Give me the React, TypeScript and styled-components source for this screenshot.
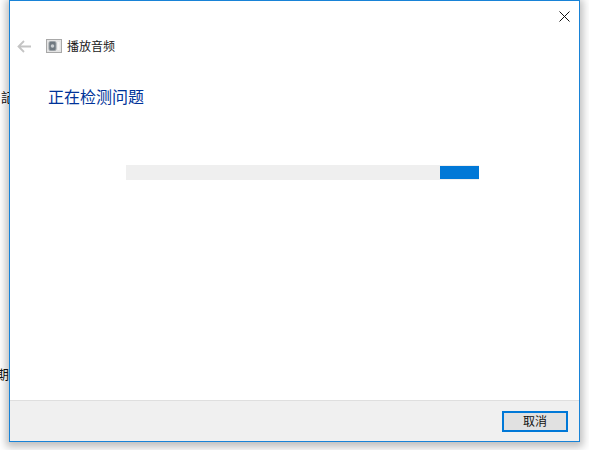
import React from 'react'
import styled, { createGlobalStyle } from 'styled-components'

const GlobalStyle = createGlobalStyle`
  html, body {
    margin: 0;
    padding: 0;
    background: #fff;
    overflow: hidden;
  }
`

const Desktop = styled.div`
  position: relative;
  width: 589px;
  height: 450px;
  padding-left: 9px;
  box-sizing: border-box;
  overflow: hidden;
  background: #fff;
  font-family: 'Noto Sans CJK SC', 'Liberation Sans', sans-serif;
`

const BehindText = styled.span<{ $top: number; $left: number }>`
  position: absolute;
  left: ${(p) => p.$left}px;
  top: ${(p) => p.$top}px;
  font-size: 13px;
  line-height: 16px;
  color: #111;
`

const Dialog = styled.div`
  position: relative;
  width: 571px;
  height: 442px;
  box-sizing: border-box;
  display: flex;
  flex-direction: column;
  background: #fff;
  border: 1px solid #1883d7;
  box-shadow: 0 2px 8px 3px rgba(0, 0, 0, 0.26);
`

const CloseButton = styled.button`
  align-self: flex-end;
  width: 30px;
  height: 30px;
  padding: 0;
  display: flex;
  align-items: center;
  justify-content: center;
  background: none;
  border: 0;
`

const NavRow = styled.div`
  display: flex;
  align-items: center;
  height: 30px;
  padding-left: 7px;
`

const BackButton = styled.span`
  display: flex;
  width: 16px;
  margin-right: 13px;
`

const AppIcon = styled.span`
  display: flex;
  margin-right: 5px;
`

const NavTitle = styled.span`
  font-size: 12px;
  line-height: 16px;
  color: #1a1a1a;
`

const Content = styled.main`
  flex: 1;
  padding: 24px 0 0 38px;
`

const Heading = styled.h1`
  margin: 0;
  font-size: 16px;
  line-height: 22px;
  font-weight: 400;
  color: #003399;
`

const Track = styled.div`
  display: flex;
  justify-content: flex-end;
  width: 353px;
  height: 15px;
  margin: 58px 0 0 78px;
  background: #efefef;
`

const Bar = styled.div`
  width: 39px;
  height: 13px;
  margin-top: 1px;
  background: #0078d7;
`

const Footer = styled.footer`
  display: flex;
  align-items: center;
  justify-content: flex-end;
  height: 40px;
  padding: 0 11px 0 0;
  background: #f0f0f0;
  border-top: 1px solid #dfdfdf;
`

const CancelButton = styled.button`
  width: 66px;
  height: 21px;
  padding: 0;
  box-sizing: border-box;
  background: #e1e1e1;
  border: 2px solid #0078d7;
  font-family: inherit;
  font-size: 12px;
  line-height: 16px;
  color: #111;
`

export default function App() {
  return (
    <Desktop>
      <GlobalStyle />
      <BehindText $top={89} $left={1}>記</BehindText>
      <BehindText $top={366} $left={-4}>期</BehindText>
      <Dialog>
        <CloseButton aria-label="关闭">
          <svg width="11" height="11" viewBox="0 0 11 11">
            <path d="M0.5 0.5 L10.5 10.5 M10.5 0.5 L0.5 10.5" stroke="#111" strokeWidth="1" fill="none" />
          </svg>
        </CloseButton>
        <NavRow>
          <BackButton>
            <svg width="15" height="13" viewBox="0 0 15 13">
              <path d="M1.5 6.5 H14 M7 1 L1.5 6.5 L7 12" stroke="#c4c4c4" strokeWidth="1.8" fill="none" />
            </svg>
          </BackButton>
          <AppIcon>
            <svg width="16" height="14" viewBox="0 0 16 14">
              <rect x="0.5" y="0.5" width="15" height="13" fill="#e4e4e4" stroke="#a8a8a8" />
              <rect x="3" y="2.5" width="7" height="9" rx="1.5" fill="#6f7880" stroke="#9aa0a5" />
              <circle cx="6.5" cy="7" r="1.8" fill="#c9cdd0" />
              <rect x="11.5" y="3" width="2" height="8" fill="#f4f4f4" />
            </svg>
          </AppIcon>
          <NavTitle>播放音频</NavTitle>
        </NavRow>
        <Content>
          <Heading>正在检测问题</Heading>
          <Track>
            <Bar />
          </Track>
        </Content>
        <Footer>
          <CancelButton>取消</CancelButton>
        </Footer>
      </Dialog>
    </Desktop>
  )
}
